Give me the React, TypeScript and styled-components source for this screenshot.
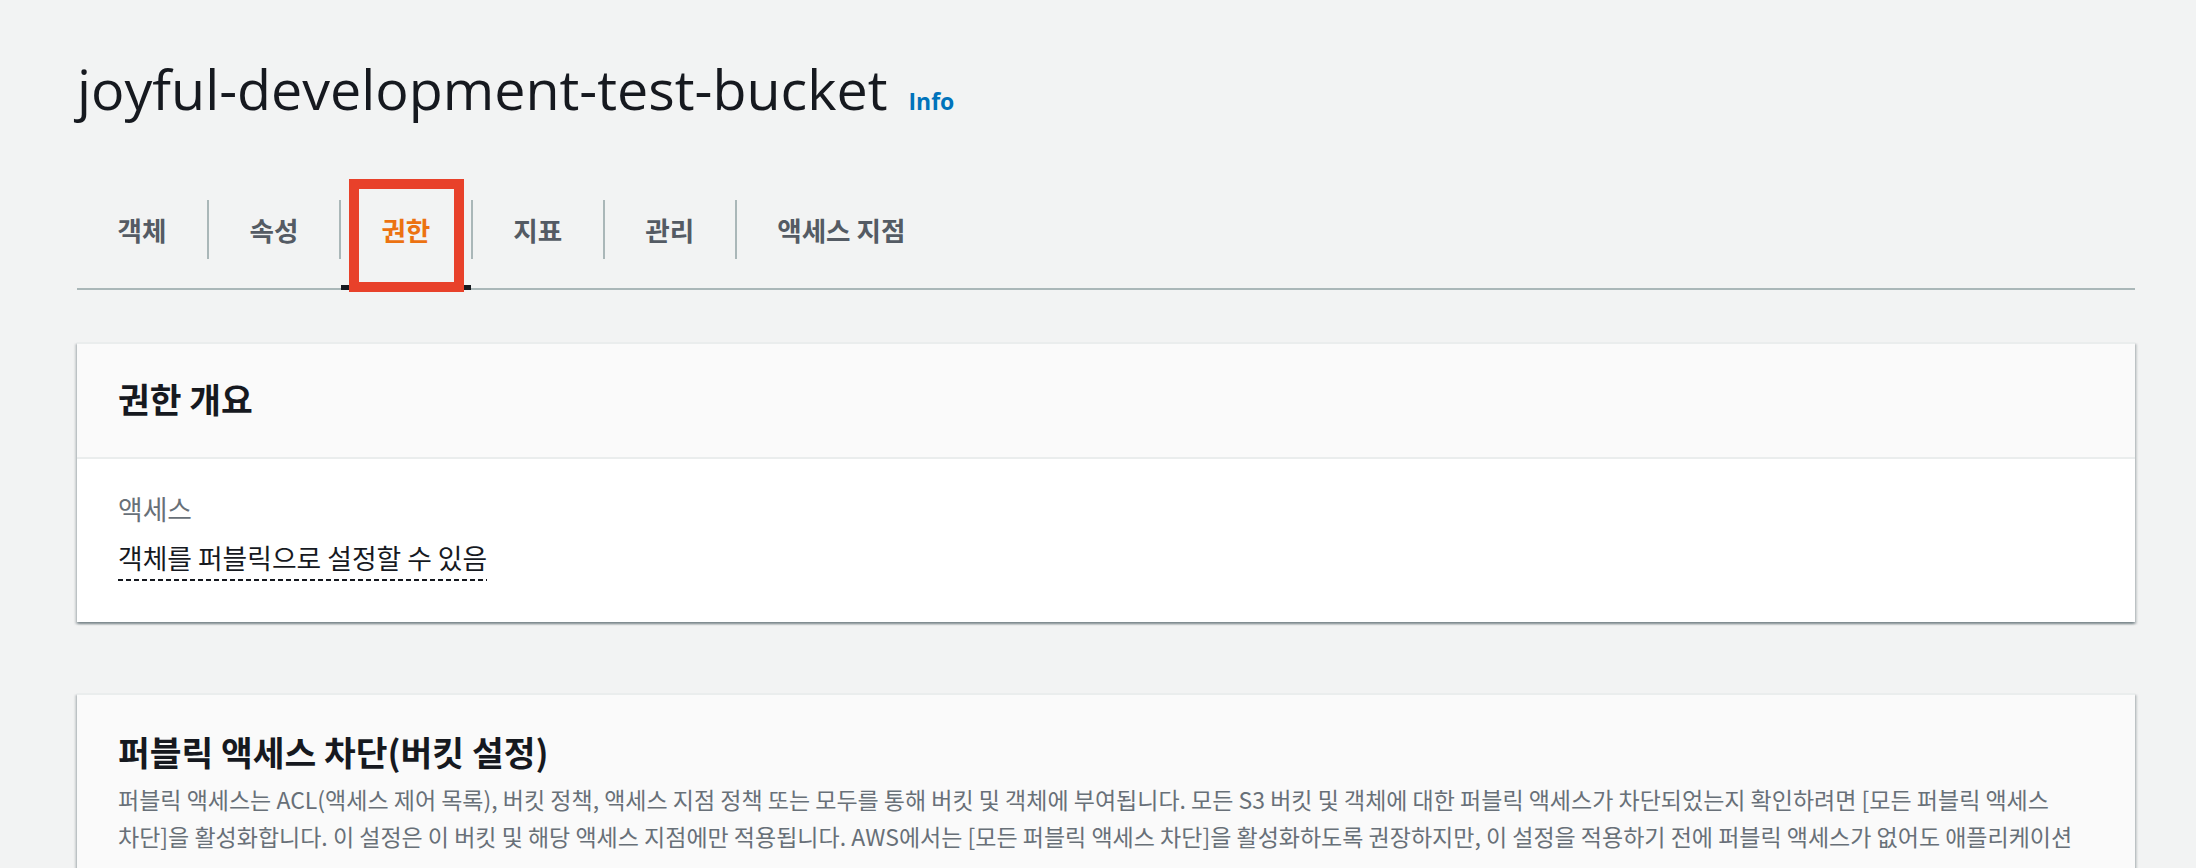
import React from "react";
import styled, { createGlobalStyle } from "styled-components";

const GlobalStyle = createGlobalStyle`
  body {
    margin: 0;
    background-color: #f2f3f3;
    font-family: "Noto Sans CJK KR", "Noto Sans", sans-serif;
    color: #16191f;
  }
`;

const Page = styled.main`
  padding: 51px 61px 0 77px;
`;

const TitleRow = styled.div`
  display: flex;
  align-items: baseline;
  gap: 21px;
`;

const Title = styled.h1`
  margin: 0;
  font-family: "Open Sans", "Noto Sans CJK KR", sans-serif;
  font-weight: 400;
  font-size: 55.6px;
  line-height: 76px;
  color: #16191f;
`;

const InfoLink = styled.a`
  font-family: "Open Sans", sans-serif;
  font-weight: 700;
  font-size: 23px;
  color: #0073bb;
  text-decoration: none;
`;

const TabList = styled.nav`
  display: flex;
  height: 117px;
  margin-top: 44px;
  border-bottom: 2px solid #aab7b8;
`;

const Tab = styled.div<{ $active?: boolean }>`
  position: relative;
  display: flex;
  align-items: center;

  &::after {
    content: "";
    display: ${(p) => (p.$active ? "block" : "none")};
    position: absolute;
    left: 2px;
    right: 0;
    bottom: -2px;
    height: 5px;
    background-color: #16191f;
  }
`;

const TabLabel = styled.span<{ $active?: boolean; $first?: boolean }>`
  padding: 0 40.5px 0 40.5px;
  border-left: ${(p) => (p.$first ? "none" : "2px solid #aab7b8")};
  font-weight: 700;
  font-size: 26.6px;
  line-height: 59px;
  color: ${(p) => (p.$active ? "#ec7211" : "#545b64")};
  white-space: nowrap;
`;

const Highlight = styled.span`
  position: absolute;
  top: 8px;
  bottom: -4px;
  left: 10px;
  right: 7px;
  border: 10px solid #e8412a;
  z-index: 2;
`;

const Card = styled.section<{ $gap: number }>`
  margin-top: ${(p) => p.$gap}px;
  background-color: #ffffff;
  border-top: 2px solid #eaeded;
  box-shadow: 0 2px 2px 0 rgba(0, 28, 36, 0.3),
    2px 2px 2px 0 rgba(0, 28, 36, 0.15), -2px 2px 2px 0 rgba(0, 28, 36, 0.15);
`;

const CardHeader = styled.header<{ $top: number; $bottom: number; $divider?: boolean }>`
  padding: ${(p) => p.$top}px 40px ${(p) => p.$bottom}px 41px;
  background-color: #fafafa;
  border-bottom: ${(p) => (p.$divider ? "2px solid #eaeded" : "none")};
`;

const CardTitle = styled.h2`
  margin: 0;
  font-weight: 700;
  font-size: 34.5px;
  line-height: 44px;
  color: #16191f;
`;

const CardBody = styled.div`
  padding: 30px 41px 41px;
`;

const FieldLabel = styled.div`
  font-size: 26.8px;
  line-height: 40px;
  color: #687078;
`;

const FieldValue = styled.div`
  margin-top: 9px;
`;

const DottedText = styled.span`
  display: inline-block;
  padding-bottom: 3px;
  font-size: 26.8px;
  line-height: 40px;
  color: #16191f;
  background-image: repeating-linear-gradient(
    to right,
    #16191f 0 5px,
    transparent 5px 8px
  );
  background-repeat: no-repeat;
  background-position: left bottom;
  background-size: 100% 2px;
`;

const Description = styled.p`
  margin: 8px 0 0;
  font-size: 23px;
  line-height: 37px;
  color: #687078;
`;

const DescLine = styled.span`
  display: block;
  white-space: nowrap;
`;

const tabs = ["객체", "속성", "권한", "지표", "관리", "액세스 지점"];
const activeTab = "권한";

const descriptionLines = [
  "퍼블릭 액세스는 ACL(액세스 제어 목록), 버킷 정책, 액세스 지점 정책 또는 모두를 통해 버킷 및 객체에 부여됩니다. 모든 S3 버킷 및 객체에 대한 퍼블릭 액세스가 차단되었는지 확인하려면 [모든 퍼블릭 액세스",
  "차단]을 활성화합니다. 이 설정은 이 버킷 및 해당 액세스 지점에만 적용됩니다. AWS에서는 [모든 퍼블릭 액세스 차단]을 활성화하도록 권장하지만, 이 설정을 적용하기 전에 퍼블릭 액세스가 없어도 애플리케이션",
];

export default function App() {
  return (
    <>
      <GlobalStyle />
      <Page>
        <TitleRow>
          <Title>joyful-development-test-bucket</Title>
          <InfoLink href="#">Info</InfoLink>
        </TitleRow>

        <TabList>
          {tabs.map((name, i) => {
            const active = name === activeTab;
            return (
              <Tab key={name} $active={active}>
                <TabLabel $active={active} $first={i === 0}>
                  {name}
                </TabLabel>
                {active && <Highlight />}
              </Tab>
            );
          })}
        </TabList>

        <Card $gap={52}>
          <CardHeader $top={32} $bottom={37} $divider>
            <CardTitle>권한 개요</CardTitle>
          </CardHeader>
          <CardBody>
            <FieldLabel>액세스</FieldLabel>
            <FieldValue>
              <DottedText>객체를 퍼블릭으로 설정할 수 있음</DottedText>
            </FieldValue>
          </CardBody>
        </Card>

        <Card $gap={71}>
          <CardHeader $top={34} $bottom={37}>
            <CardTitle>퍼블릭 액세스 차단(버킷 설정)</CardTitle>
            <Description>
              {descriptionLines.map((line) => (
                <DescLine key={line}>{line}</DescLine>
              ))}
            </Description>
          </CardHeader>
        </Card>
      </Page>
    </>
  );
}
